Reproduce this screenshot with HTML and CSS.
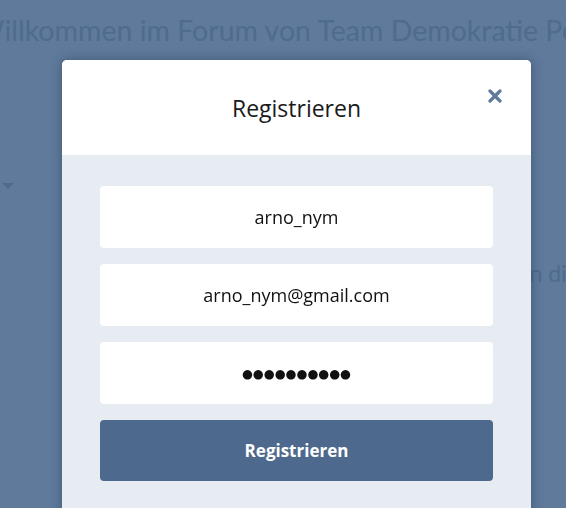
FILE: index.html
```html
<!DOCTYPE html>
<html lang="de">
<head>
<meta charset="utf-8">
<title>Registrieren</title>
<link rel="stylesheet" href="styles.css">
</head>
<body>
<main class="page">
  <h1 class="welcome">Willkommen im Forum von Team Demokratie Personal</h1>
  <span class="caret"></span>
  <p class="side-text">in diesem Forum austauschen</p>
</main>
<div class="modal" role="dialog" aria-labelledby="modal-title">
  <header class="modal-header">
    <h2 id="modal-title" class="modal-title">Registrieren</h2>
    <button class="close" aria-label="Schließen">
      <svg viewBox="0 0 14 14" width="14" height="14"><path d="M2 2 L12 12 M12 2 L2 12" stroke="currentColor" stroke-width="3.2" stroke-linecap="round"/></svg>
    </button>
  </header>
  <form class="modal-body">
    <input class="field" type="text" value="arno_nym">
    <input class="field" type="email" value="arno_nym@gmail.com">
    <input class="field pw" type="text" value="●●●●●●●●●●" readonly aria-label="Passwort">
    <button class="submit" type="button">Registrieren</button>
  </form>
</div>
</body>
</html>
```
FILE: styles.css
```css
html, body {
  margin: 0;
  padding: 0;
  height: 100%;
  overflow: hidden;
}
body {
  background: #5f7a9b;
  font-family: "Open Sans", "Noto Sans", "Liberation Sans", sans-serif;
}
.page {
  padding-top: 10px;
  display: flex;
  flex-direction: column;
  align-items: flex-start;
}
.welcome {
  margin: 0 0 0 -25px;
  white-space: nowrap;
  font-family: "Lato", "Open Sans", sans-serif;
  font-weight: 400;
  font-size: 28.5px;
  color: #4f6b8d;
  line-height: 40px;
}
.caret {
  margin: 133px 0 0 2px;
  width: 0;
  height: 0;
  border-left: 6px solid transparent;
  border-right: 6px solid transparent;
  border-top: 6px solid #52698b;
}
.side-text {
  margin: 70px 0 0 524px;
  white-space: nowrap;
  font-family: "Lato", "Open Sans", sans-serif;
  font-size: 23px;
  color: #4f6b8d;
}
.modal {
  position: fixed;
  left: 62px;
  top: 60px;
  width: 469px;
  bottom: -20px;
  border-radius: 5px;
  overflow: hidden;
  background: #e7ecf3;
  box-shadow: 0 0 12px rgba(30, 45, 70, 0.45);
}
.modal-header {
  position: relative;
  height: 95px;
  background: #ffffff;
  display: flex;
  align-items: center;
  justify-content: center;
}
.modal-title {
  margin: 0;
  font-weight: 400;
  font-size: 23px;
  color: #1a1a1a;
}
.close {
  position: absolute;
  right: 28px;
  top: 28px;
  width: 16px;
  height: 16px;
  padding: 1px;
  border: 0;
  background: none;
  color: #5f7a9b;
  display: flex;
}
.modal-body {
  padding: 31px 38px 0;
  display: flex;
  flex-direction: column;
  gap: 16px;
}
.field {
  box-sizing: border-box;
  height: 62px;
  border: 0;
  border-radius: 4px;
  background: #ffffff;
  text-align: center;
  font-family: inherit;
  font-size: 18px;
  color: #111111;
  outline: none;
}
.field.pw {
  font-family: "DejaVu Sans", sans-serif;
  font-size: 12.5px;
  color: #111111;
}
.submit {
  height: 61px;
  border: 0;
  border-radius: 4px;
  background: #4d698d;
  color: #ffffff;
  font-family: inherit;
  font-weight: 700;
  font-size: 17px;
}
```
